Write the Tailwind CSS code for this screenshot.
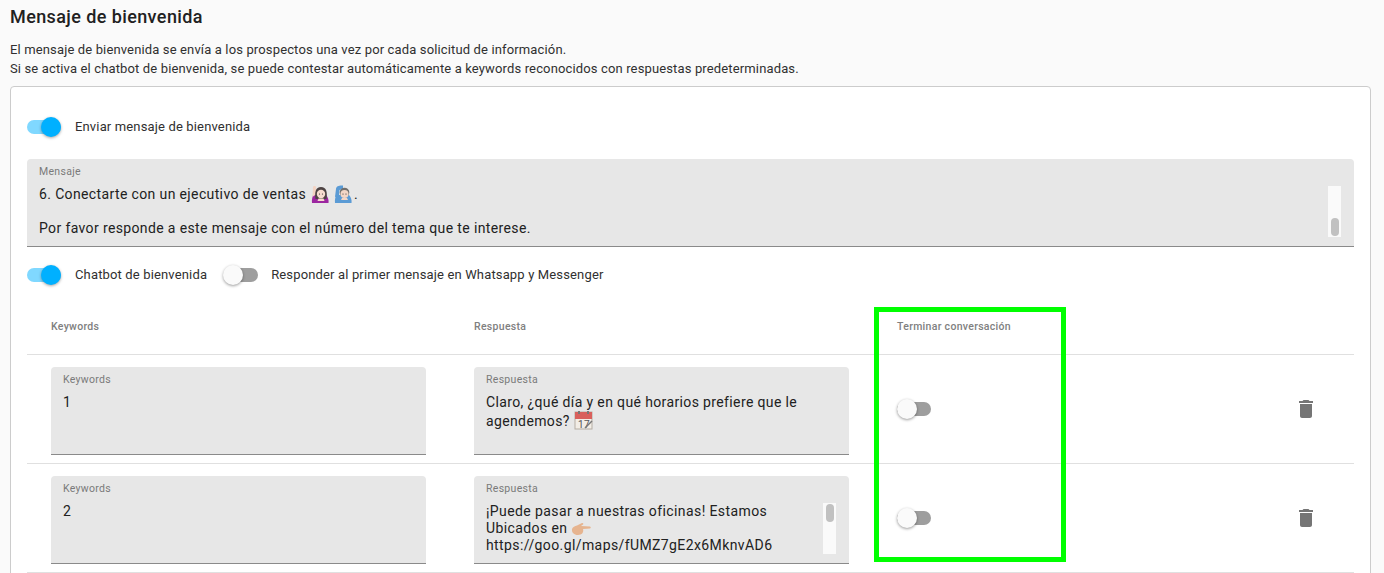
<!DOCTYPE html>
<html lang="es">
<head>
<meta charset="utf-8">
<script src="https://cdn.jsdelivr.net/npm/@tailwindcss/browser@4"></script>
</head>
<body class="h-[573px] w-[1384px] overflow-hidden bg-[#fafafa] font-['Roboto',sans-serif] text-[#212121]">
<div class="relative h-[573px] px-[10px]">
  <h1 class="pt-[6px] h-[40px] text-[18px] leading-[22px] font-medium tracking-[0.4px]">Mensaje de bienvenida</h1>
  <p class="text-[13px] leading-[19px] tracking-[0.14px] h-[38px] text-[#303030]">El mensaje de bienvenida se envía a los prospectos una vez por cada solicitud de información.<br>Si se activa el chatbot de bienvenida, se puede contestar automáticamente a keywords reconocidos con respuestas predeterminadas.</p>
  <section class="mt-[8px] h-[600px] w-[1361px] rounded border border-[#cccccc] bg-white px-4">
    <div class="flex h-[72px] items-center gap-[14px] pt-[8px] text-[13px] tracking-[0.15px] text-[#303030]">
      <span class="relative block h-[14px] w-[34px] rounded-full bg-[#80d8ff]"><span class="absolute right-0 top-[-3px] size-5 rounded-full bg-[#00b0ff] shadow-[0_1px_3px_rgba(0,0,0,0.35)]"></span></span>
      <span>Enviar mensaje de bienvenida</span>
    </div>
    <div class="relative h-[88px] w-[1327px] rounded-t border-b border-[#8a8a8a] bg-[#e7e7e7] px-3 text-[14px] tracking-[0.37px]">
      <div class="pt-[6px] text-[10.5px] leading-[13px] tracking-[0.3px] text-[#7a7a7a]">Mensaje</div>
      <div class="mt-[6px] flex h-[20px] items-center gap-[4px] leading-[20px]">
        <span>6. Conectarte con un ejecutivo de ventas</span>
        <svg class="ml-[1px]" width="18" height="18" viewBox="0 0 18 18"><path d="M1 18c-.5-3 .5-6 1-8l13 0c2 2 3 5 2.500 8z" fill="#9c27a0"/><path d="M1.500 12 2 2c0-1.500 3-1.500 3 0l.5 7z" fill="#f3d3c3"/><path d="M4.500 14c-1-7 0-12 5.500-12s6.500 5 5.500 12z" fill="#4d4343"/><circle cx="10" cy="9" r="4.200" fill="#f7dccf"/><path d="M7.500 13.500h5l1 2.500h-7z" fill="#f7dccf"/><circle cx="8.500" cy="9" r=".6" fill="#333"/><circle cx="11.500" cy="9" r=".6" fill="#333"/></svg>
        <svg class="ml-[1px]" width="18" height="18" viewBox="0 0 18 18"><path d="M1 18c-.5-3 .5-6 1-8l13 0c2 2 3 5 2.500 8z" fill="#5b9bd5"/><path d="M1 12 2 4c0-3 4-4 7-3.500v3.500l-3.500 1-.5 6z" fill="#5b9bd5"/><circle cx="10.500" cy="7.500" r="4.800" fill="#73706d"/><circle cx="10.500" cy="9" r="4" fill="#f4d6c6"/><path d="M8 13h5l1 2h-7z" fill="#f4d6c6"/><circle cx="9" cy="9" r=".6" fill="#333"/><circle cx="12" cy="9" r=".6" fill="#333"/></svg>
        <span class="ml-[-2px]">.</span>
      </div>
      <div class="mt-[14px] leading-[20px]">Por favor responde a este mensaje con el número del tema que te interese.</div>
      <div class="absolute right-[13px] top-[27px] h-[51px] w-[13px] bg-[#fafafa]"><div class="absolute bottom-[1px] left-[3px] h-[18px] w-[8px] rounded-full bg-[#c1c1c1]"></div></div>
    </div>
    <div class="flex h-[55px] items-center text-[13px] tracking-[0.15px] text-[#303030]">
      <span class="relative block h-[14px] w-[34px] rounded-full bg-[#80d8ff]"><span class="absolute right-0 top-[-3px] size-5 rounded-full bg-[#00b0ff] shadow-[0_1px_3px_rgba(0,0,0,0.35)]"></span></span>
      <span class="ml-[14px]">Chatbot de bienvenida</span>
      <span class="relative ml-[17px] block h-[14px] w-[34px] rounded-full bg-[#9e9e9e]"><span class="absolute left-[-1px] top-[-3px] size-5 rounded-full bg-[#fafafa] shadow-[0_1px_3px_rgba(0,0,0,0.4)]"></span></span>
      <span class="ml-[13px]">Responder al primer mensaje en Whatsapp y Messenger</span>
    </div>
    <div class="grid h-[52px] w-[1327px] grid-cols-[423px_423px_1fr] items-center pb-[2px] pl-6 text-[10.5px] font-medium tracking-[0.3px] text-[#808080]">
      <span>Keywords</span><span>Respuesta</span><span>Terminar conversación</span>
    </div>
    <div class="grid h-[109px] w-[1327px] grid-cols-[423px_423px_1fr_60px] items-start border-t border-[#e0e0e0] pl-6">
      <div class="mt-3 h-[88px] w-[375px] rounded-t border-b border-[#8a8a8a] bg-[#e7e7e7] px-3">
        <div class="pt-[6px] text-[10.5px] leading-[13px] tracking-[0.3px] text-[#7a7a7a]">Keywords</div>
        <div class="mt-[8px] text-[14px] leading-[17px] tracking-[0.37px]">1</div>
      </div>
      <div class="mt-3 h-[88px] w-[375px] rounded-t border-b border-[#8a8a8a] bg-[#e7e7e7] px-3">
        <div class="pt-[6px] text-[10.5px] leading-[13px] tracking-[0.3px] text-[#7a7a7a]">Respuesta</div>
        <div class="mt-[8px] text-[14px] leading-[17px] tracking-[0.37px]">Claro, ¿qué día y en qué horarios prefiere que le<br>agendemos?
          <svg class="inline-block align-[-4px]" width="19" height="19" viewBox="0 0 19 19"><rect x="1" y="1" width="17" height="17" fill="#f2ede6" stroke="#b5ada3"/><rect x="1" y="1" width="17" height="7" fill="#d9605c"/><rect x="4" y="0" width="2" height="3" fill="#777"/><rect x="13" y="0" width="2" height="3" fill="#777"/><text x="4" y="16.500" font-size="10" font-family="Roboto" fill="#555">17</text><path d="M11 17 18 10" stroke="#777" stroke-width="1.500"/></svg>
        </div>
      </div>
      <div class="flex h-[108px] items-center">
        <span class="relative block h-[14px] w-[34px] rounded-full bg-[#9e9e9e]"><span class="absolute left-0 top-[-3px] size-5 rounded-full bg-[#fafafa] shadow-[0_1px_3px_rgba(0,0,0,0.4)]"></span></span>
      </div>
      <div class="flex h-[108px] items-center">
        <svg width="24" height="24" viewBox="0 0 24 24" fill="#757575"><path d="M6 19c0 1.100.9 2 2 2h8c1.100 0 2-.9 2-2V7H6v12zM19 4h-3.500l-1-1h-5l-1 1H5v2h14V4z"/></svg>
      </div>
    </div>
    <div class="grid h-[110px] w-[1327px] grid-cols-[423px_423px_1fr_60px] items-start border-y border-[#e0e0e0] pl-6">
      <div class="mt-3 h-[88px] w-[375px] rounded-t border-b border-[#8a8a8a] bg-[#e7e7e7] px-3">
        <div class="pt-[6px] text-[10.5px] leading-[13px] tracking-[0.3px] text-[#7a7a7a]">Keywords</div>
        <div class="mt-[8px] text-[14px] leading-[17px] tracking-[0.37px]">2</div>
      </div>
      <div class="relative mt-3 h-[88px] w-[375px] rounded-t border-b border-[#8a8a8a] bg-[#e7e7e7] px-3">
        <div class="pt-[6px] text-[10.5px] leading-[13px] tracking-[0.3px] text-[#7a7a7a]">Respuesta</div>
        <div class="mt-[8px] text-[14px] leading-[17px] tracking-[0.4px]">¡Puede pasar a nuestras oficinas! Estamos<br>Ubicados en
          <svg class="inline-block align-[-3px]" width="20" height="14" viewBox="0 0 20 14"><path d="M1 7c.5-2 3-3 5-3.500L11 1c1-.5 2 1 1 1.500L10 4l9 .5c1 .5 1 1.500 0 2l-7 .5c1 3-1 6-5 6-4 0-6.500-2.500-6-6z" fill="#e6b48f"/></svg><br>https://goo.gl/maps/fUMZ7gE2x6MknvAD6
        </div>
        <div class="absolute right-[13px] top-[27px] h-[51px] w-[13px] bg-[#fafafa]"><div class="absolute left-[3px] top-[1px] h-[18px] w-[8px] rounded-full bg-[#c1c1c1]"></div></div>
      </div>
      <div class="flex h-[108px] items-center">
        <span class="relative block h-[14px] w-[34px] rounded-full bg-[#9e9e9e]"><span class="absolute left-0 top-[-3px] size-5 rounded-full bg-[#fafafa] shadow-[0_1px_3px_rgba(0,0,0,0.4)]"></span></span>
      </div>
      <div class="flex h-[108px] items-center">
        <svg width="24" height="24" viewBox="0 0 24 24" fill="#757575"><path d="M6 19c0 1.100.9 2 2 2h8c1.100 0 2-.9 2-2V7H6v12zM19 4h-3.500l-1-1h-5l-1 1H5v2h14V4z"/></svg>
      </div>
    </div>
  </section>
  <div class="absolute left-[874px] top-[307px] h-[255px] w-[192px] border-[5px] border-[#00ff00]"></div>
</div>
</body>
</html>
